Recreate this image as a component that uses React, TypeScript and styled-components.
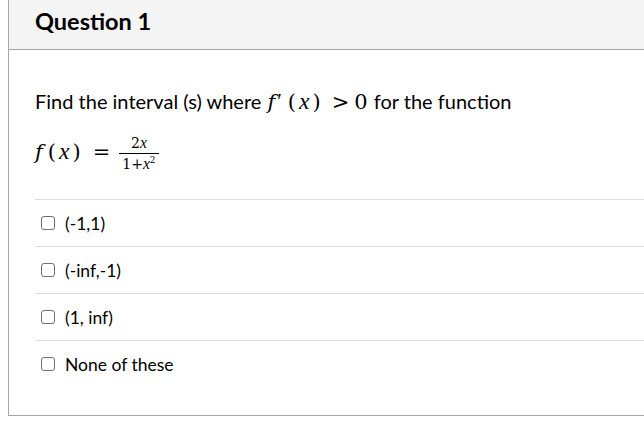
import React from "react";
import styled, { createGlobalStyle } from "styled-components";

const Global = createGlobalStyle`
  html, body { margin: 0; padding: 0; background: #fff; }
  body { padding-left: 8px; font-family: Lato, "Noto Sans", sans-serif; color: #000; overflow: hidden; }
`;

const Card = styled.div`
  width: 660px;
  border-left: 1px solid #a6a6a6;
  border-bottom: 1px solid #a6a6a6;
  background: #fff;
`;

const Header = styled.div`
  height: 50px;
  box-sizing: border-box;
  background: #f4f4f4;
  border-bottom: 1px solid #a6a6a6;
  display: flex;
  align-items: center;
  padding-left: 26px;
  padding-bottom: 8px;
`;

const Title = styled.h2`
  margin: 0;
  font-family: Lato, sans-serif;
  font-weight: 700;
  font-size: 23.5px;
  color: #000;
`;

const Body = styled.div`
  padding: 38px 0 0 26px;
`;

const Para = styled.div`
  font-size: 20px;
  line-height: 26px;
  height: 26px;
  color: #000;
  white-space: nowrap;
`;

const mathFont = `"DejaVu Serif", "Liberation Serif", serif`;

const MathLine = styled.div`
  display: flex;
  align-items: center;
  height: 40px;
  margin-top: 18px;
  margin-bottom: -2px;
  font-family: ${mathFont};
  font-size: 21px;
  color: #000;
`;

const MathInline = styled.span`
  font-family: ${mathFont};
  font-size: 21px;
  line-height: 1;
  color: #000;
  margin: 0 1px;
`;

const I = styled.i`
  font-style: italic;
`;

const Var = styled.i<{ $space?: number }>`
  font-family: "Liberation Serif", serif;
  font-style: italic;
  font-size: 1.12em;
  line-height: 1;
  margin: 0 ${(p) => p.$space ?? 3}px;
`;

const Prime = styled.span`
  font-family: "Liberation Serif", serif;
  font-size: 1em;
  line-height: 0;
  vertical-align: 0.05em;
  margin-left: 2px;
`;

const Op = styled.span<{ $gap?: number }>`
  padding: 0 ${(p) => p.$gap ?? 6}px;
`;

const Frac = styled.span`
  display: inline-flex;
  flex-direction: column;
  align-items: center;
  font-size: 14px;
  line-height: 13px;
  margin-left: 4px;
  margin-top: 2px;
`;

const Num = styled.span`
  padding: 0 2px 2px;
  border-bottom: 1px solid #000;
  width: 100%;
  text-align: center;
`;

const Den = styled.span`
  padding: 2px 1px 0;
  sup { font-size: 9px; line-height: 0; vertical-align: 6px; }
`;

const Options = styled.div`
  margin-top: 29px;
  padding-bottom: 28px;
`;

const Option = styled.label`
  display: flex;
  align-items: center;
  height: 47px;
  border-top: 1px solid #dcdcdc;
  box-sizing: border-box;
  padding-left: 6px;
  font-size: 17.5px;
  color: #000;
  gap: 10px;
`;

const Box = styled.span`
  width: 14px;
  height: 14px;
  border: 1px solid #707070;
  border-radius: 3px;
  box-sizing: border-box;
  background: #fff;
  flex: none;
`;

const options = ["(-1,1)", "(-inf,-1)", "(1, inf)", "None of these"];

export default function App() {
  return (
    <>
      <Global />
      <Card>
        <Header>
          <Title>Question 1</Title>
        </Header>
        <Body>
          <Para>
            Find the interval (s) where{" "}
            <MathInline>
              <I>f</I>
              <Prime>′</Prime>
              <Op $gap={6}>
                (<Var>x</Var>)
              </Op>
              <Op $gap={5}>&gt;</Op>0
            </MathInline>{" "}
            for the function
          </Para>
          <MathLine>
            <I>f</I>
            <Op $gap={5}>
              (<Var>x</Var>)
            </Op>
            <Op $gap={7}>=</Op>
            <Frac>
              <Num>
                2<Var $space={0}>x</Var>
              </Num>
              <Den>
                1+<Var $space={0}>x</Var>
                <sup>2</sup>
              </Den>
            </Frac>
          </MathLine>
          <Options>
            {options.map((o) => (
              <Option key={o}>
                <Box />
                {o}
              </Option>
            ))}
          </Options>
        </Body>
      </Card>
    </>
  );
}
